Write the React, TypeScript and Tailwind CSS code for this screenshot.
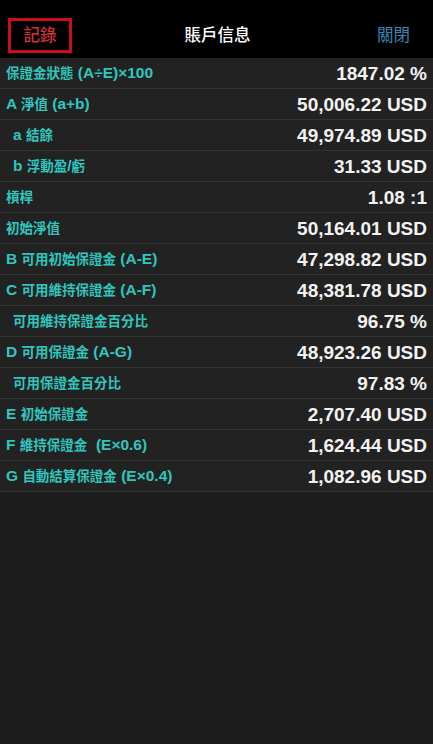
const rows: { label: string; value: string; indent?: boolean }[] = [
  { label: "保證金狀態 (A÷E)×100", value: "1847.02 %" },
  { label: "A 淨值 (a+b)", value: "50,006.22 USD" },
  { label: "a 結餘", value: "49,974.89 USD", indent: true },
  { label: "b 浮動盈/虧", value: "31.33 USD", indent: true },
  { label: "槓桿", value: "1.08 :1" },
  { label: "初始淨值", value: "50,164.01 USD" },
  { label: "B 可用初始保證金 (A-E)", value: "47,298.82 USD" },
  { label: "C 可用維持保證金 (A-F)", value: "48,381.78 USD" },
  { label: "可用維持保證金百分比", value: "96.75 %", indent: true },
  { label: "D 可用保證金 (A-G)", value: "48,923.26 USD" },
  { label: "可用保證金百分比", value: "97.83 %", indent: true },
  { label: "E 初始保證金", value: "2,707.40 USD" },
  { label: "F 維持保證金  (E×0.6)", value: "1,624.44 USD" },
  { label: "G 自動結算保證金 (E×0.4)", value: "1,082.96 USD" },
];

const font = { fontFamily: '"Liberation Sans", "Noto Sans CJK TC", sans-serif' };

// CJK glyphs render narrower than the latin runs in the original, so size them apart
const Label = ({ text }: { text: string }) => {
  const parts = text.split(/([\u3000-\u9fff\uff00-\uffef]+)/).filter(Boolean);
  return (
    <>
      {parts.map((p, i) =>
        /[\u3000-\u9fff]/.test(p) ? (
          <span key={i} className="text-[13.5px]">{p}</span>
        ) : (
          <span key={i} className="text-[15.5px]">{p}</span>
        )
      )}
    </>
  );
};

export default function App() {
  return (
    <div className="w-[433px] h-[744px] bg-[#1c1c1c] flex flex-col" style={font}>
      <header className="h-[58px] bg-black flex items-end pb-[5px] px-[8px]">
        <div className="w-[64px] h-[35px] border-[3px] border-[#c8101a] flex items-center justify-center">
          <span className="text-[16.5px] font-medium text-[#d0343a] leading-none">記錄</span>
        </div>
        <div className="flex-1 h-[35px] flex items-center justify-center text-[16.5px] font-medium text-white pl-[2px]">
          賬戶信息
        </div>
        <div className="w-[64px] h-[35px] flex items-center justify-end text-[16.5px] text-[#3f84b4] pr-[15px]">
          關閉
        </div>
      </header>
      <div className="flex flex-col">
        {rows.map((r) => (
          <div
            key={r.label}
            className="h-[31px] border-b border-[#333333] bg-[#222222] flex items-center justify-between pr-[6px]"
          >
            <span
              className={`font-bold text-[#2ec7bf] whitespace-pre leading-none ${
                r.indent ? "pl-[13px]" : "pl-[6px]"
              }`}
            >
              <Label text={r.label} />
            </span>
            <span className="text-[19px] font-bold text-[#f2f2f2] leading-none">{r.value}</span>
          </div>
        ))}
      </div>
    </div>
  );
}
